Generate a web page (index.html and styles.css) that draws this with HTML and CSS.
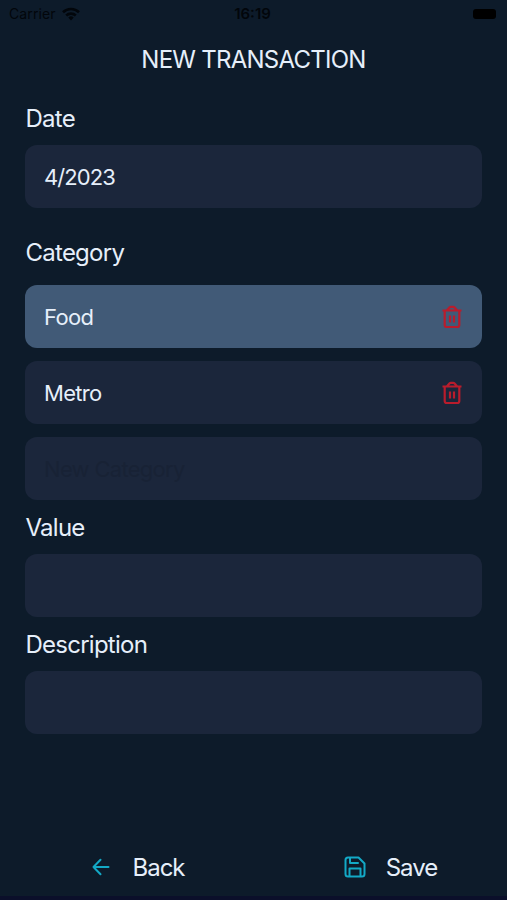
FILE: index.html
```
<!DOCTYPE html>
<html lang="en">
<head>
    <meta charset="UTF-8">
    <meta name="viewport" content="width=device-width, initial-scale=1.0">
    <title>New Transaction</title>
    <link rel="stylesheet" href="styles.css">
</head>
<body>
    <div class="status-bar">
        <div class="carrier">
            Carrier
            <svg width="18" height="14" viewBox="0 0 18 14" fill="none" stroke="currentColor" stroke-width="2.6">
                <path d="M1 5.2a11.5 11.5 0 0 1 16 0"/>
                <path d="M4.2 8.5a7 7 0 0 1 9.6 0"/>
                <path d="M9 13.4l-2.7-2.8a4 4 0 0 1 5.4 0z" fill="currentColor" stroke="none"/>
            </svg>
        </div>
        <div class="clock">16:19</div>
        <div class="battery"></div>
    </div>

    <h1>NEW TRANSACTION</h1>

    <form class="form">
        <label class="label label-date">Date</label>
        <div class="field field-date">4/2023</div>

        <label class="label label-category">Category</label>
        <div class="categories">
            <div class="field selected">
                <span>Food</span>
                <svg class="trash" width="22" height="26" viewBox="0 0 22 26">
                    <path d="M1.5 6.5h19M3.7 6.5V21q0 2 2 2h10.6q2 0 2-2V6.5M5.8 6.5l2.6-3q.6-.7 1.5-.7h2.2q.9 0 1.5.7l2.6 3M9 11.5v7M13 11.5v7"/>
                </svg>
            </div>
            <div class="field">
                <span>Metro</span>
                <svg class="trash" width="22" height="26" viewBox="0 0 22 26">
                    <path d="M1.5 6.5h19M3.7 6.5V21q0 2 2 2h10.6q2 0 2-2V6.5M5.8 6.5l2.6-3q.6-.7 1.5-.7h2.2q.9 0 1.5.7l2.6 3M9 11.5v7M13 11.5v7"/>
                </svg>
            </div>
            <div class="field placeholder">New Category</div>
        </div>

        <label class="label label-value">Value</label>
        <div class="field"></div>

        <label class="label label-description">Description</label>
        <div class="field"></div>
    </form>

    <div class="footer">
        <div class="action back">
            <svg width="18" height="18" viewBox="0 0 18 18">
                <path d="M16.5 9H1.5M8.5 1.8L1.5 9l7 7.2"/>
            </svg>
            <span>Back</span>
        </div>
        <div class="action save">
            <svg width="22" height="22" viewBox="0 0 22 22">
                <path d="M4 1.5h10.5l6 6V18q0 2.5-2.5 2.5H4q-2.5 0-2.5-2.5V4q0-2.5 2.5-2.5zM5.5 20v-7.5h11V20M6 2v5h8"/>
            </svg>
            <span>Save</span>
        </div>
    </div>
</body>
</html>
```

FILE: styles.css
```
* {
    box-sizing: border-box;
}
body {
    margin: 0;
    height: 900px;
    display: flex;
    flex-direction: column;
    background-color: #0d1b2a;
    color: #e6effa;
    font-family: Inter, "Liberation Sans", sans-serif;
    overflow: hidden;
}
.status-bar {
    display: grid;
    grid-template-columns: 1fr auto 1fr;
    align-items: center;
    height: 27px;
    padding: 0 11px 0 9px;
    color: #02060b;
    font-size: 14px;
}
.carrier {
    display: flex;
    align-items: center;
    gap: 6px;
    letter-spacing: 0.1px;
}
.clock {
    font-weight: 600;
    font-size: 15px;
}
.battery {
    justify-self: end;
    width: 23px;
    height: 10px;
    border-radius: 3px;
    background-color: #000;
}
h1 {
    margin: 17px 0 0;
    font-size: 24px;
    line-height: 32px;
    font-weight: 400;
    text-align: center;
    letter-spacing: -0.75px;
}
.form {
    margin: 27px 25px 0;
}
.label {
    display: block;
    padding-left: 0.5px;
    font-size: 24px;
    line-height: 32px;
    letter-spacing: -0.75px;
}
.field {
    display: flex;
    align-items: center;
    justify-content: space-between;
    height: 63px;
    padding: 0 19px;
    border-radius: 12px;
    background-color: #1b263b;
    font-size: 22px;
    letter-spacing: -0.7px;
}
.field-date {
    letter-spacing: -0.9px;
}
.label-date {
    margin-bottom: 10px;
}
.label-category {
    margin: 29px 0 16px;
}
.label-value {
    margin: 12px 0 10px;
}
.label-description {
    margin: 12px 0 10px;
}
.categories {
    display: flex;
    flex-direction: column;
    gap: 13px;
}
.selected {
    background-color: #415a77;
}
.placeholder {
    color: #182235;
}
.trash {
    fill: none;
    stroke: #b91c2c;
    stroke-width: 2.2;
}
.footer {
    display: flex;
    height: 62px;
    margin-top: auto;
    border-bottom: 4px solid #0b0f2a;
}
.action {
    display: flex;
    align-items: center;
    justify-content: center;
    flex: 1;
    font-size: 24px;
    letter-spacing: -1px;
}
.action svg {
    fill: none;
    stroke: #13a9c6;
    stroke-width: 2;
    stroke-linecap: round;
    stroke-linejoin: round;
}
.back {
    padding-left: 22px;
    gap: 22px;
}
.save {
    padding-left: 19px;
    gap: 20px;
}
```
